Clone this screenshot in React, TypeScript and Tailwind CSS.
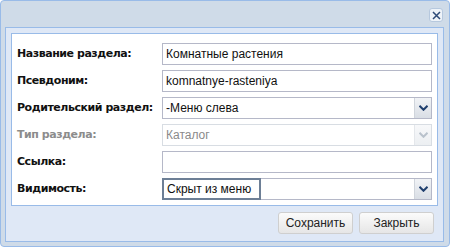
import React from "react";

const font = { fontFamily: '"DejaVu Sans", "Noto Sans", sans-serif' };
const fieldFont = { fontFamily: '"Liberation Sans", Arial, sans-serif' };

function Chevron({ disabled }: { disabled?: boolean }) {
  return (
    <svg width="9" height="6" viewBox="0 0 9 6">
      <path
        d="M0.5 0.8 L4.5 4.8 L8.5 0.8"
        fill="none"
        stroke={disabled ? "#b9c2cc" : "#1f3f6e"}
        strokeWidth="2"
      />
    </svg>
  );
}

function Field({ value, combo, disabled, focused }: { value: string; combo?: boolean; disabled?: boolean; focused?: boolean }) {
  return (
    <div
      className={`flex h-[22px] w-[270px] border ${
        disabled ? "border-[#d8dde3] bg-white" : "border-[#b5b8c8] bg-white"
      }`}
      style={fieldFont}
    >
      {focused ? (
        <div className="flex items-center h-[22px] -mt-[1px] -ml-[1px] w-[99px] whitespace-nowrap border-2 border-[#6d7f96] pl-[3px] text-[12px] text-[#111]">
          {value}
        </div>
      ) : (
        <div
          className={`flex-1 flex items-center whitespace-nowrap pl-[3px] text-[12px] ${
            disabled ? "text-[#8a8a8a]" : "text-[#111]"
          }`}
        >
          {value}
        </div>
      )}
      {focused && <div className="flex-1" />}
      {combo && (
        <div
          className={`w-[17px] flex items-center justify-center border-l ${
            disabled
              ? "border-[#e4e7eb] bg-gradient-to-b from-[#f7f8fa] to-[#eceff2]"
              : "border-[#d0d5dc] bg-gradient-to-b from-[#f1f3f6] to-[#d9dee5]"
          }`}
        >
          <Chevron disabled={disabled} />
        </div>
      )}
    </div>
  );
}

const rows = [
  { label: "Название раздела:", value: "Комнатные растения" },
  { label: "Псевдоним:", value: "komnatnye-rasteniya" },
  { label: "Родительский раздел:", value: "-Меню слева", combo: true },
  { label: "Тип раздела:", value: "Каталог", combo: true, disabled: true },
  { label: "Ссылка:", value: "" },
  { label: "Видимость:", value: "Скрыт из меню", combo: true, focused: true },
];

export default function App() {
  return (
    <div
      className="w-[450px] h-[247px] bg-[#cfdbe8] border border-[#99bbe8] rounded-[4px] flex flex-col pl-[4px] pr-[5px] pb-[4px]"
      style={font}
    >
      {/* header */}
      <div className="h-[26px] flex items-start justify-end pt-[7px] pr-[1px]">
        <button className="w-[14px] h-[14px] rounded-[3px] border border-[#b6c8de] bg-[#eef3f9] flex items-center justify-center">
          <svg width="9" height="9" viewBox="0 0 9 9">
            <path d="M1 1 L8 8 M8 1 L1 8" stroke="#2d4a78" strokeWidth="1.5" />
          </svg>
        </button>
      </div>

      {/* body */}
      <div className="flex-1 border border-[#99bbe8] bg-[#dfe8f6] p-[5px] pr-[5px] flex flex-col">
        <div className="border border-[#99bbe8] bg-white pl-[5px] pr-[5px] pt-[9px] pb-[5px] flex flex-col gap-[5px]">
          {rows.map((r) => (
            <div key={r.label} className="flex items-center h-[22px]">
              <div
                className={`w-[145px] text-[11px] font-bold tracking-[-0.45px] whitespace-nowrap ${
                  r.disabled ? "text-[#8c8c8c]" : "text-[#111]"
                }`}
              >
                {r.label}
              </div>
              <Field value={r.value} combo={r.combo} disabled={r.disabled} focused={r.focused} />
            </div>
          ))}
        </div>

        <div className="flex justify-end gap-[6px] pt-[6px] pr-[4px]" style={fieldFont}>
          <button className="w-[75px] h-[22px] rounded-[3px] border border-[#cfcfcf] bg-gradient-to-b from-[#fbfbfb] to-[#e6e6e6] text-[12px] text-[#222]">
            Сохранить
          </button>
          <button className="w-[75px] h-[22px] rounded-[3px] border border-[#cfcfcf] bg-gradient-to-b from-[#fbfbfb] to-[#e6e6e6] text-[12px] text-[#222]">
            Закрыть
          </button>
        </div>
      </div>
    </div>
  );
}
